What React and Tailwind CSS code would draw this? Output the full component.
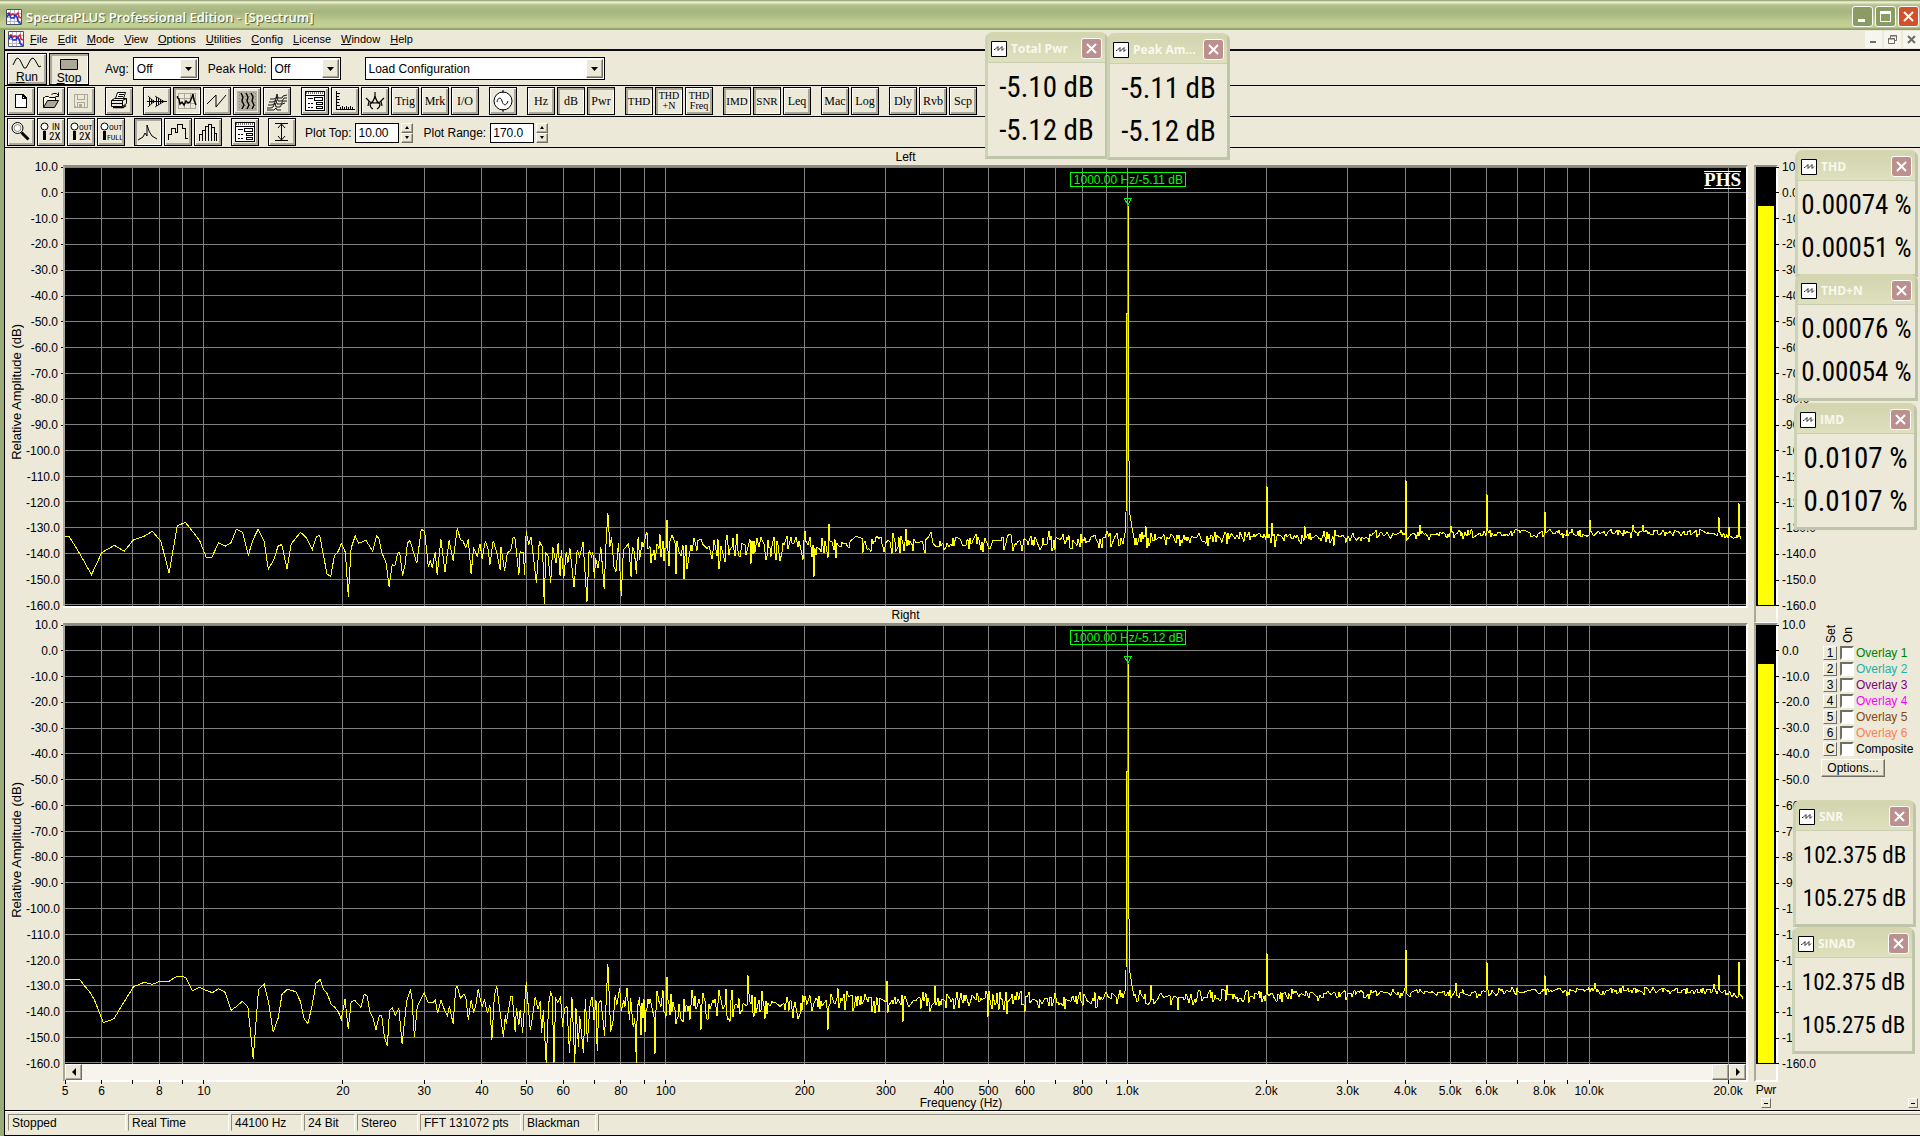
import React from "react";

// ---------- Dados ----------

const menuItems = ["File", "Edit", "Mode", "View", "Options", "Utilities", "Config", "License", "Window", "Help"];

const dbMarks = Array.from({ length: 18 }, (_, i) => 10 - i * 10);

const freqLines = [
  6, 7, 8, 9, 10, 20, 30, 40, 50, 60, 70, 80, 90, 100, 200, 300, 400, 500, 600, 700, 800, 900,
  1000, 2000, 3000, 4000, 5000, 6000, 7000, 8000, 9000, 10000, 20000
];

const freqLabels = {
  5: "5", 6: "6", 8: "8", 10: "10", 20: "20", 30: "30", 40: "40", 50: "50", 60: "60", 80: "80",
  100: "100", 200: "200", 300: "300", 400: "400", 500: "500", 600: "600", 800: "800",
  1000: "1.0k", 2000: "2.0k", 3000: "3.0k", 4000: "4.0k", 5000: "5.0k", 6000: "6.0k", 8000: "8.0k",
  10000: "10.0k", 20000: "20.0k"
};

const overlays = [
  { key: "1", label: "Overlay 1", color: "text-[#008000]" },
  { key: "2", label: "Overlay 2", color: "text-[#20b2aa]" },
  { key: "3", label: "Overlay 3", color: "text-[#800080]" },
  { key: "4", label: "Overlay 4", color: "text-[#ff00ff]" },
  { key: "5", label: "Overlay 5", color: "text-[#8b4513]" },
  { key: "6", label: "Overlay 6", color: "text-[#ff7f50]" },
  { key: "C", label: "Composite", color: "text-black" }
];

const statusCells = [
  { text: "Stopped", width: "w-[118px]" },
  { text: "Real Time", width: "w-[101px]" },
  { text: "44100 Hz", width: "w-[71px]" },
  { text: "24 Bit", width: "w-[51px]" },
  { text: "Stereo", width: "w-[61px]" },
  { text: "FFT 131072 pts", width: "w-[101px]" },
  { text: "Blackman", width: "w-[73px]" }
];

// Graves: amostras [x, y] em unidades finas, de 5 Hz até ~89 Hz
const leftLow = [
  160,109,170,109,198,165,225,224,250,158,281,136,305,154,328,119,352,110,374,94,395,124,415,220,435,78,455,67,
  475,98,490,122,506,172,520,172,536,128,553,138,567,128,580,88,595,97,609,165,621,118,633,88,648,125,658,208,
  671,180,682,139,691,133,704,206,714,132,737,97,750,111,766,149,776,110,784,106,802,222,811,230,820,167,830,153,
  837,130,847,157,854,290,861,145,871,108,879,130,897,121,914,154,923,108,929,114,936,157,947,190,954,260,962,193,
  968,198,975,160,980,157,987,227,993,195,999,130,1005,121,1022,190,1033,88,1041,94,1050,200,1055,182,1060,203,
  1067,155,1072,224,1081,118,1091,215,1101,121,1111,182,1121,85,1129,119,1135,123,1142,143,1148,118,1155,221,
  1161,145,1170,168,1177,131,1182,176,1190,122,1197,150,1201,194,1209,122,1218,158,1226,209,1228,140,1237,212,
  1244,158,1252,152,1258,112,1262,112,1272,224,1275,155,1283,158,1286,224,1290,94,1296,134,1302,110,1315,250,
  1322,124,1330,142,1334,311,1338,160,1343,166,1350,248,1355,140,1363,190,1368,130,1373,228,1376,150,1382,234,
  1388,155,1392,190,1397,145,1407,262,1415,150,1421,170,1429,127,1439,305,1444,150,1450,170,1453,155,1457,234,
  1460,175,1466,205,1473,142,1481,268,1486,120,1490,40,1495,140,1499,110,1505,200,1510,215,1516,128,1523,288,
  1528,150,1535,140,1541,130,1547,230,1550,140,1555,155,1560,222,1564,112,1568,180
];

const rightLow = [
  160,118,196,118,208,138,222,158,232,180,254,248,268,242,280,236,304,187,328,140,354,127,374,133,393,124,415,124,
  434,109,446,109,456,113,472,152,490,142,505,151,521,158,536,146,552,157,567,211,582,198,594,184,608,200,621,356,
  634,148,648,133,659,190,670,277,682,235,692,162,705,148,726,155,737,185,746,238,755,250,765,200,775,130,785,118,
  793,148,802,160,812,192,822,203,830,217,837,238,846,178,854,268,861,186,870,181,885,202,893,163,900,167,907,215,
  914,232,922,269,930,227,936,227,943,295,950,317,955,212,962,203,969,226,978,205,986,313,997,185,1006,151,
  1010,170,1016,292,1023,200,1040,159,1050,188,1062,188,1067,180,1073,220,1081,181,1090,210,1097,226,1102,199,
  1111,253,1117,147,1121,139,1129,175,1137,163,1142,170,1148,240,1155,181,1161,215,1166,200,1172,148,1182,200,
  1188,180,1195,220,1201,195,1206,301,1212,165,1218,139,1224,200,1234,290,1239,225,1241,253,1252,169,1256,170,
  1263,275,1266,205,1272,255,1275,210,1281,278,1290,127,1300,270,1305,235,1312,170,1319,208,1324,184,1328,278,
  1332,210,1339,370,1345,190,1350,157,1354,170,1358,370,1362,175,1367,187,1374,170,1379,260,1384,205,1390,200,
  1396,340,1402,170,1409,370,1412,205,1418,320,1421,228,1430,338,1435,178,1440,305,1447,185,1452,170,1456,240,
  1461,180,1464,334,1468,190,1473,180,1482,287,1490,72,1497,275,1503,240,1508,165,1512,195,1519,144,1523,213,
  1529,180,1532,200,1537,143,1543,240,1546,175,1552,262,1556,235,1560,370,1562,205,1568,170
];

// Picos e vales acima de ~89 Hz: [x, dB]
const leftPeaks = [
  [602, -127], [604, -145], [611, -148], [619, -150], [654, -146], [686, -144], [749, -149], [764, -128.5], [841, -130.5],
  [1081, -129.5], [1202, -114], [1207, -128], [1210, -137.5], [1240, -129.5], [1269, -137], [1341, -111.5], [1355, -129],
  [1386, -129.5], [1422, -117], [1480, -124], [1525, -127], [1568, -128.8], [1578, -129], [1654, -126], [1664, -129.6], [1674, -120.6]
];
const rightPeaks = [
  [580, -148], [590, -156.5], [602, -126.5], [612, -143], [636, -147], [642, -143], [665, -144], [683, -126], [763, -147],
  [773, -131], [822, -128], [838, -144], [870, -130], [923, -142], [942, -141], [1086, -129.6], [1113, -139.5], [1162, -129.6],
  [1202, -117.5], [1341, -116], [1391, -129], [1422, -121], [1480, -126], [1530, -129], [1558, -130], [1649, -129.5],
  [1654, -125.7], [1674, -120.8]
];

// Piso de ruído: [x, centro, amplitude]
const floor = [
  [575, -139, 9], [640, -137.5, 6], [760, -136.5, 5], [860, -135.5, 4], [1000, -135, 3.6], [1060, -134.5, 3],
  [1200, -133.6, 2.4], [1340, -132.8, 2], [1480, -131.9, 1.6], [1640, -132, 1.4], [1664, -133, 1.3], [1678, -134.5, 1]
];

// Tom principal em 1 kHz
const tone = [
  [1060, -132], [1061, -125], [1062, -47], [1063, -47], [1063, -5.1], [1063, -47], [1064, -104], [1065, -125],
  [1067, -130], [1069, -134]
];

const WIDTH = 1681;
const HEIGHT = 438;
const DECADE = 461.7;

const freqX = (f) => `${((Math.log10(f / 5) * DECADE) / WIDTH) * 100}%`;
const dbToY = (db) => ((10 - db) / 170) * HEIGHT;

function floorAt(x) {
  const i = Math.max(1, floor.findIndex((p) => p[0] >= x));
  const [x0, c0, a0] = floor[i - 1];
  const [x1, c1, a1] = floor[i];
  const t = (x - x0) / (x1 - x0);
  return [c0 + (c1 - c0) * t, a0 + (a1 - a0) * t];
}

function buildTrace(low, lowOffset, peaks, seed) {
  const points = [];
  for (let i = 0; i < low.length; i += 2) {
    points.push([(low[i] - 160) / 2.45, low[i + 1] / 3 + lowOffset]);
  }
  let s = seed;
  const random = () => {
    s = (s * 16807) % 2147483647;
    return s / 2147483647;
  };
  const byX = new Map(peaks);
  for (let x = 576; x <= 1678; x++) {
    if (x >= 1060 && x <= 1069) {
      if (x === 1060) tone.forEach(([px, db]) => points.push([px, dbToY(db)]));
      continue;
    }
    if (byX.has(x)) {
      points.push([x, dbToY(byX.get(x))]);
      continue;
    }
    const besidePeak = byX.has(x - 1) || byX.has(x + 1);
    if (!besidePeak && random() < 0.3) continue;
    const [center, amp] = floorAt(x);
    const n = random() + random() - 1;
    points.push([x, dbToY(center + n * amp * (n < 0 ? 1.4 : 1.1))]);
  }
  return points.map(([x, y]) => `${x.toFixed(1)},${Math.min(y, HEIGHT).toFixed(1)}`).join(" ");
}

const leftTrace = buildTrace(leftLow, 333, leftPeaks, 4711);
const rightTrace = buildTrace(rightLow, 315, rightPeaks, 90210);

// ---------- Ícones ----------

function Glyph({ children, size = 22, fill = "none" }) {
  return (
    <svg width={size} height={size} viewBox={`0 0 ${size} ${size}`} fill={fill} stroke="black" shapeRendering="crispEdges" className="shrink-0" aria-hidden="true">
      {children}
    </svg>
  );
}

const NewIcon = () => <Glyph><path d="M5.5 4.5h7l4 4v9h-11z" fill="white" strokeWidth="1.5" /><path d="M12.5 4.5v4h4" /></Glyph>;
const OpenIcon = () => (
  <Glyph>
    <path d="M3.500 17.500v-10h1l1-1h3l1 1h6v3" fill="#fffff0" shapeRendering="auto" />
    <path d="M3.500 17.500l4-7h11l-4 7z" fill="#aca899" shapeRendering="auto" />
    <path d="M11.500 4.500l2-1h3l2 2m0-3v4h-3" shapeRendering="auto" />
  </Glyph>
);
const SaveIcon = () => (
  <Glyph>
    <g stroke="#aca899">
      <path d="M4.500 4.500h13v13h-12l-1-1z" strokeWidth="1.500" />
      <path d="M7.500 4.500v5h7v-5M7.500 17.500v-5h7v5" />
      <path d="M9 14h2v3h-2z" fill="#aca899" />
    </g>
  </Glyph>
);
const PrintIcon = () => (
  <Glyph>
    <path d="M7.500 8.500l2-6h8l-2 6" fill="white" shapeRendering="auto" />
    <path d="M10.500 4.500h5M9.500 6.500h5" />
    <path d="M3.500 10.500l3-2h12v5l-4 3h-11z" fill="#ece9d8" shapeRendering="auto" />
    <path d="M3.500 10.500h11v6M14.500 10.500l4-2M3.500 13.500h11" shapeRendering="auto" />
    <path d="M5 17.500h10l3-2" strokeWidth="1.500" shapeRendering="auto" />
  </Glyph>
);
const BurstIcon = () => (
  <Glyph>
    <path d="M1 11.500h20M3.500 7v9M5.500 9v5M7.500 10v3M10.500 7v9M12.500 8v7M14.500 9v5M16.500 10v3" />
    <path d="M2 6l6 5.500L2 17M9 6l9 5.500L9 17" shapeRendering="auto" strokeWidth="0.800" />
  </Glyph>
);
const SpectrumIcon = () => (
  <Glyph>
    <path d="M2 3.500h18M2 8.500h18M2 13.500h18M2 18.500h18M2.500 3v16M8.500 3v16M14.500 3v16M19.500 3v16" stroke="#aca899" />
    <path d="M1.500 6v2l1.500 1 1 5 2-2 2 3 2-4 2 2 2-1 2-5 1-3 1 6 2 5" strokeWidth="1.400" shapeRendering="auto" />
  </Glyph>
);
const PhaseIcon = () => <Glyph><path d="M1 14L10 5V17L20 5" shapeRendering="auto" /></Glyph>;
const SpectrogramIcon = () => (
  <Glyph>
    <path d="M1 1h20v20H1z" fill="#b5b2a4" stroke="none" />
    <path d="M3 2v18M5 3v18M9 3v18M13 3v18M17 2v18M19 3v18" stroke="#8d8a7d" strokeDasharray="1 2" />
    <path d="M5 3l2 4-1 4 2 4-2 4M10 3l2 4-1 4 2 4-2 4M15 3l2 4-1 4 2 4-2 4" strokeWidth="1.400" shapeRendering="auto" />
  </Glyph>
);
const SurfaceIcon = () => (
  <Glyph>
    <path d="M4 9h4l2-1 1-4 1 4h4l1-2 4-1M3 12h4l2-1 2-4 1 4h4l2-3 3 0M2 15h4l2-1 2-4 1 4h4l2-3 4 0M1 18h4l2-1 2-4 1 4h4l2-3 3-1M1 20h7l2-2 1 2h4" strokeWidth="0.900" shapeRendering="auto" />
  </Glyph>
);
const PanelIcon = () => (
  <Glyph>
    <path d="M1.500 1.500h19v19h-19z" fill="white" />
    <path d="M2 3h18" strokeWidth="2" strokeDasharray="1 1" stroke="#777" />
    <path d="M1 5.500h20M4 8.500h5M10.500 7.500h8v3h-8zM12.500 12.500h6v2h-6zM12.500 16.500h6v2h-6z" />
    <path d="M4 13.500h5M4 17.500h5" strokeDasharray="2 1" />
  </Glyph>
);
const RulerIcon = () => (
  <Glyph>
    <path d="M2.500 1v18.500H21M3 3.500h3M3 6.500h2M3 9.500h3M3 12.500h2M3 15.500h3M6.500 19v-2M8.500 19v-3M10.500 19v-2M12.500 19v-3M14.500 19v-2M16.500 19v-3M18.500 19v-2" />
  </Glyph>
);
const CompassIcon = () => (
  <Glyph>
    <path d="M11 2v4M2 8l4 4 5 1 5-1 4-4M11 6c-1 4-3 7-5 8 0 3 1 4 3 5M11 6c1 4 3 7 5 8 0 3-1 4-3 5M5 11l-1 5M17 11l1 5" strokeWidth="1.200" shapeRendering="auto" />
  </Glyph>
);
const SineIcon = () => (
  <Glyph>
    <circle cx="11" cy="11" r="9" fill="white" shapeRendering="auto" />
    <path d="M11 0v3M11 19v3M5 12c1-5 4-5 5-1s4 6 6 0" shapeRendering="auto" />
  </Glyph>
);
const ZoomIcon = () => (
  <Glyph>
    <circle cx="7.500" cy="7" r="5.500" fill="white" shapeRendering="auto" />
    <circle cx="7.500" cy="7" r="3.500" stroke="#8a887c" shapeRendering="auto" />
    <path d="M11.500 11.500l7 7" strokeWidth="3" shapeRendering="auto" />
  </Glyph>
);

function ZoomTextIcon({ top, bottom }) {
  return (
    <Glyph>
      <circle cx="4.500" cy="5.500" r="3.500" fill="white" shapeRendering="auto" />
      <path d="M4.500 10v9" strokeWidth="3" />
      <g fill="black" stroke="none" fontFamily="Roboto Condensed">
        <text x={top === "IN" ? 12 : 9} y="9" fontSize={top === "IN" ? 9 : 8}>{top}</text>
        <text x={bottom === "2X" ? 9 : 7} y="19" fontSize={bottom === "2X" ? 11 : 8}>{bottom}</text>
      </g>
    </Glyph>
  );
}

const LinePlotIcon = () => <Glyph><path d="M1 19l5-3 2-4 2 3V4l2 6 3 5 5 3" shapeRendering="auto" /></Glyph>;
const OctaveIcon = () => <Glyph><path d="M1.500 19v-6h3v-6h4v4h2v-8h5v4h3v10h2" /></Glyph>;
const BarPlotIcon = () => <Glyph><path d="M2.500 20v-7h3v7v-11h3v11v-15h3v15v-17h3v17v-14h3v14v-8h2v8" /></Glyph>;
const RangeIcon = () => (
  <Glyph>
    <path d="M4 2.500h13M4 19.500h13M10.500 3v16" />
    <path d="M7 7l3.500-4L14 7M7 15l3.500 4 3.500-4" shapeRendering="auto" />
  </Glyph>
);

function AppIcon() {
  return (
    <svg width="16" height="16" viewBox="0 0 16 16" fill="none" aria-hidden="true">
      <path d="M0 0h16v16H0z" fill="white" />
      <path d="M4.500 0v16M8.500 0v16M12.500 0v16M0 4.500h16M0 8.500h16M0 12.500h16" stroke="#b4b6c2" />
      <path d="M.5.500h15v15H.5z" stroke="#4a4d5c" />
      <path d="M1 5l2-1 2 2 2-1 2 2 3-3 1 4 2 1" stroke="#e0203a" strokeWidth="1.500" />
      <path d="M1 8l2-3 2 4h3l1-3 2 2 1 4 3 3" stroke="#2030d0" strokeWidth="1.500" />
    </svg>
  );
}

function MeterIcon() {
  return (
    <svg width="16" height="16" viewBox="0 0 16 16" fill="none" stroke="black" className="shrink-0" aria-hidden="true">
      <path d="M.5.500h15v15H.5z" fill="white" />
      <path d="M3 8.500h1l3-3v4l4-4v4l2-2" strokeWidth=".8" />
    </svg>
  );
}

function CloseMark() {
  return (
    <svg width="13" height="13" viewBox="0 0 13 13" stroke="white" strokeWidth="2" aria-hidden="true">
      <path d="M2 2l9 9M11 2l-9 9" />
    </svg>
  );
}

// ---------- Barra de ferramentas ----------

const raised = "shadow-[inset_1px_1px_0_#ffffff,inset_-2px_-2px_0_#aca899]";
const sunken = "shadow-[inset_2px_2px_0_#aca899,inset_-1px_-1px_0_#ffffff]";

function ToolButton({ label, pressed, disabled, children }) {
  return (
    <button
      type="button"
      aria-label={label}
      aria-pressed={pressed}
      disabled={disabled}
      className={`flex h-7 w-7 shrink-0 items-center justify-center border border-black bg-[#ece9d8] font-['Liberation_Serif',serif] text-xs leading-none ${pressed ? sunken : raised}`}
    >
      {children}
    </button>
  );
}

function Stacked({ top, bottom }) {
  return (
    <span className="flex flex-col items-center text-[10px] leading-[10px]">
      <span>{top}</span>
      <span>{bottom}</span>
    </span>
  );
}

const Caps = ({ children }) => <span className="text-[11px]">{children}</span>;

const toolGroups = [
  [
    { label: "New", content: <NewIcon /> },
    { label: "Open", content: <OpenIcon /> },
    { label: "Save", content: <SaveIcon />, disabled: true }
  ],
  [{ label: "Print", content: <PrintIcon /> }],
  [
    { label: "Time series", content: <BurstIcon /> },
    { label: "Spectrum", content: <SpectrumIcon />, pressed: true },
    { label: "Phase", content: <PhaseIcon /> },
    { label: "Spectrogram", content: <SpectrogramIcon /> },
    { label: "3-D surface", content: <SurfaceIcon /> }
  ],
  [
    { label: "Settings", content: <PanelIcon /> },
    { label: "Scaling", content: <RulerIcon /> },
    { label: "Calibration", content: <CompassIcon /> },
    { label: "Trigger", content: "Trig" },
    { label: "Markers", content: "Mrk" },
    { label: "Input output", content: "I/O" }
  ],
  [{ label: "Signal generator", content: <SineIcon /> }],
  [
    { label: "Hertz", content: "Hz" },
    { label: "Decibel", content: "dB", pressed: true },
    { label: "Power", content: "Pwr", pressed: true }
  ],
  [
    { label: "THD", content: <Caps>THD</Caps>, pressed: true },
    { label: "THD+N", content: <Stacked top="THD" bottom="+N" />, pressed: true },
    { label: "THD Freq", content: <Stacked top="THD" bottom="Freq" /> }
  ],
  [
    { label: "IMD", content: <Caps>IMD</Caps>, pressed: true },
    { label: "SNR", content: <Caps>SNR</Caps>, pressed: true },
    { label: "Leq", content: "Leq" }
  ],
  [
    { label: "Macro", content: "Mac" },
    { label: "Log", content: "Log" }
  ],
  [
    { label: "Delay", content: "Dly" },
    { label: "Reverb", content: "Rvb" },
    { label: "Scope", content: "Scp" }
  ]
];

const plotGroups = [
  [
    { label: "Zoom", content: <ZoomIcon /> },
    { label: "Zoom in 2X", content: <ZoomTextIcon top="IN" bottom="2X" /> },
    { label: "Zoom out 2X", content: <ZoomTextIcon top="OUT" bottom="2X" /> },
    { label: "Zoom out full", content: <ZoomTextIcon top="OUT" bottom="FULL" /> }
  ],
  [
    { label: "Line plot", content: <LinePlotIcon />, pressed: true },
    { label: "Octave plot", content: <OctaveIcon /> },
    { label: "Bar plot", content: <BarPlotIcon /> }
  ],
  [{ label: "Plot options", content: <PanelIcon /> }],
  [{ label: "Auto range", content: <RangeIcon /> }]
];

function ToolGroups({ groups, gap }) {
  return (
    <div className={`flex ${gap}`}>
      {groups.map((group) => (
        <div key={group[0].label} className="flex gap-0.5">
          {group.map(({ content, ...tool }) => (
            <ToolButton key={tool.label} {...tool}>{content}</ToolButton>
          ))}
        </div>
      ))}
    </div>
  );
}

function DropDown({ id, value, width }) {
  return (
    <div className={`relative h-[23px] ${width}`}>
      <select id={id} aria-label={value} className="h-full w-full appearance-none border border-black bg-white pl-[3px] text-xs text-black">
        <option>{value}</option>
      </select>
      <span className="pointer-events-none absolute top-0.5 right-0.5 flex h-[19px] w-[17px] items-center justify-center border border-t-white border-r-[#716f64] border-b-[#716f64] border-l-white bg-[#ece9d8] shadow-[inset_-1px_-1px_0_#aca899]">
        <svg width="7" height="4" viewBox="0 0 7 4" aria-hidden="true"><path d="M0 0h7L3.500 4z" /></svg>
      </span>
    </div>
  );
}

function NumberBox({ id, label, value }) {
  return (
    <div className="flex items-center">
      <label htmlFor={id} className="mr-1">{label}</label>
      <input id={id} defaultValue={value} className="h-5 w-11 border border-black bg-white pl-0.5 text-xs" />
      <div className="ml-0.5 flex flex-col">
        {["M0 3h4L2 0z", "M0 0h4L2 3z"].map((d, i) => (
          <button key={d} type="button" aria-label={i ? `Decrease ${label}` : `Increase ${label}`} className="flex h-2.5 w-3 items-center justify-center border border-t-white border-r-[#716f64] border-b-[#716f64] border-l-white shadow-[inset_-1px_-1px_0_#aca899]">
            <svg width="4" height="3" viewBox="0 0 4 3" aria-hidden="true"><path d={d} /></svg>
          </button>
        ))}
      </div>
    </div>
  );
}

// ---------- Gráficos ----------

function Plot({ trace, marker, logo }) {
  return (
    <div className="relative min-h-0 border-t-2 border-r-2 border-l-2 border-t-[#8f8c80] border-r-white border-l-[#aca899] bg-black">
      <svg width="100%" height="100%" className="absolute inset-0 block overflow-hidden" shapeRendering="crispEdges">
        <g stroke="#808080">
          {freqLines.map((f) => <line key={f} x1={freqX(f)} x2={freqX(f)} y1="0" y2="100%" />)}
          {dbMarks.map((db) => <line key={db} x1="0" x2="100%" y1={`${((10 - db) / 170.4) * 100}%`} y2={`${((10 - db) / 170.4) * 100}%`} />)}
        </g>
        <svg width="100%" height="100%" viewBox={`0 0 ${WIDTH} ${HEIGHT + 1}`} preserveAspectRatio="none">
          <polyline points={trace} fill="none" stroke="#ffff00" vectorEffect="non-scaling-stroke" />
        </svg>
        <svg x={freqX(1000)} y="0" className="overflow-visible" stroke="#00ff00" fill="none">
          <rect x="-56.500" y="5.500" width="115" height="14" />
          <path d="M.5 1v36M-3 31.500h7L.5 38z" />
          <text x="1" y="17" textAnchor="middle" fontSize="12" fill="#00ff00" stroke="none">{marker}</text>
        </svg>
      </svg>
      {logo && (
        <span className="absolute top-1 right-[5px] border-y border-white font-['Liberation_Serif',serif] text-[19px] leading-4 font-bold text-white">PHS</span>
      )}
    </div>
  );
}

function AmplitudeTitle() {
  return (
    <div className="flex items-center justify-center pt-3">
      <span className="rotate-180 text-[13px] leading-none whitespace-nowrap [writing-mode:vertical-rl]">Relative Amplitude (dB)</span>
    </div>
  );
}

function DbScale() {
  return (
    <div className="-mt-1 -mb-1.5 flex flex-col justify-between text-right">
      {dbMarks.map((db) => (
        <div key={db} className="flex h-3 items-center justify-end gap-[3px]">
          <span className="leading-3">{db.toFixed(1)}</span>
          <span className="h-px w-0.5 bg-black" />
        </div>
      ))}
    </div>
  );
}

function MeterScale() {
  return (
    <div className="-mt-1 -mb-1.5 -ml-0.5 flex flex-col justify-between">
      {dbMarks.map((db) => (
        <div key={db} className="flex h-3 items-center gap-[3px]">
          <span className="h-px w-[3px] bg-black" />
          <span className="leading-3">{db.toFixed(1)}</span>
        </div>
      ))}
    </div>
  );
}

function PowerMeter({ level }) {
  return (
    <div className="flex flex-col border-t-2 border-r-2 border-l-2 border-t-[#8f8c80] border-r-white border-l-[#aca899] bg-black px-0.5 pb-px">
      <div className="mt-auto bg-[#ffff00]" style={{ height: `${((level + 160) / 170) * 100}%` }} />
    </div>
  );
}

function PlotScrollBar() {
  const button = "flex h-4 w-[17px] items-center justify-center border border-t-white border-r-[#716f64] border-b-[#716f64] border-l-white bg-[#ece9d8] shadow-[inset_-1px_-1px_0_#aca899]";
  return (
    <div className="flex border-r-2 border-b-2 border-l-2 border-r-white border-b-white border-l-[#aca899] bg-[#f6f4ec]">
      <button type="button" aria-label="Scroll left" className={button}>
        <svg width="4" height="8" viewBox="0 0 4 8" aria-hidden="true"><path d="M4 0v8L0 4z" /></svg>
      </button>
      <span className={`${button} ml-auto`} />
      <button type="button" aria-label="Scroll right" className={button}>
        <svg width="4" height="8" viewBox="0 0 4 8" aria-hidden="true"><path d="M0 0v8l4-4z" /></svg>
      </button>
    </div>
  );
}

function FrequencyAxis() {
  return (
    <div className="px-0.5">
      <svg width="100%" height="28" className="block overflow-visible" fontSize="12">
        {[5, ...freqLines].map((f) => (
          <line key={f} x1={freqX(f)} x2={freqX(f)} y1="-2" y2="2" stroke="black" shapeRendering="crispEdges" />
        ))}
        {Object.entries(freqLabels).map(([f, text]) => (
          <text key={f} x={freqX(Number(f))} y="13" textAnchor="middle">{text}</text>
        ))}
        <text x="53.3%" y="25" textAnchor="middle">Frequency (Hz)</text>
      </svg>
    </div>
  );
}

function MinusButton({ label }) {
  return (
    <button type="button" aria-label={label} className="flex h-2.5 w-2.5 items-center justify-center border border-t-white border-r-[#716f64] border-b-[#716f64] border-l-white">
      <span className="h-px w-1 bg-black" />
    </button>
  );
}

function OverlayPanel() {
  return (
    <div className="flex flex-col items-start">
      <div className="flex h-[22px] items-end pb-0.5 pl-0.5">
        <span className="w-[17px] rotate-180 leading-[17px] [writing-mode:vertical-rl]">Set</span>
        <span className="w-[17px] rotate-180 leading-[17px] [writing-mode:vertical-rl]">On</span>
      </div>
      {overlays.map((item) => (
        <div key={item.key} className="flex h-4 items-center pl-0.5">
          <button type="button" aria-label={`Set ${item.label}`} className="h-3.5 w-3.5 border border-t-white border-r-[#716f64] border-b-[#716f64] border-l-white leading-3">{item.key}</button>
          <input id={`overlay-${item.key}`} type="checkbox" className="ml-[3px] h-3.5 w-3.5 appearance-none border-2 border-t-[#716f64] border-r-white border-b-white border-l-[#716f64] bg-white" />
          <label htmlFor={`overlay-${item.key}`} className={`ml-0.5 leading-4 ${item.color}`}>{item.label}</label>
        </div>
      ))}
      <button type="button" className="mt-0.5 h-[18px] w-16 border border-t-white border-r-[#716f64] border-b-[#716f64] border-l-white leading-4 shadow-[inset_-1px_-1px_0_#aca899]">Options...</button>
    </div>
  );
}

// ---------- Janelas flutuantes ----------

function ReadoutWindow({ title, values, position, size }) {
  return (
    <section className={`absolute flex h-[127px] w-[123px] flex-col rounded-t-lg border-[3px] border-t-[#d3d6ae] border-r-[#bfc5a8] border-b-[#bfc5a8] border-l-[#ccd3b4] bg-[#ece9d8] ${position}`}>
      <header className="flex h-[27px] shrink-0 items-center gap-1 bg-linear-to-b from-[#d2d5b0] to-[#dfe0bd] pr-[3px] pl-[3px]">
        <MeterIcon />
        <h2 className="min-w-0 flex-1 truncate font-['Open_Sans',sans-serif] text-xs leading-5 font-bold text-[#f8f8ee]">{title}</h2>
        <button type="button" aria-label={`Close ${title}`} className="flex h-[21px] w-[21px] shrink-0 items-center justify-center rounded-[3px] border border-white bg-[#bd9090]">
          <CloseMark />
        </button>
      </header>
      <div className={`flex flex-1 flex-col items-center justify-center border-t border-[#c9ceb0] pb-0.5 font-['Roboto_Condensed','Liberation_Sans',sans-serif] leading-[43px] whitespace-nowrap ${size}`}>
        <span>{values[0]}</span>
        <span>{values[1]}</span>
      </div>
    </section>
  );
}

function TitleBar() {
  const box = "flex h-[21px] w-[21px] items-center justify-center rounded-[3px] border border-white";
  return (
    <header className="flex h-[30px] shrink-0 items-center bg-[linear-gradient(to_bottom,#7f9160_0px,#f4f6d8_2px,#b3c08c_5px,#a6b57f_12px,#bfcd92_22px,#c3d196_27px,#8d9f68_29px)] pt-[3px] pr-px pl-1.5">
      <AppIcon />
      <h1 className="ml-1 flex-1 font-['Open_Sans',sans-serif] text-[13px] leading-5 font-semibold text-white [text-shadow:1px_1px_0_#5b6a3c]">SpectraPLUS Professional Edition - [Spectrum]</h1>
      <div className="flex gap-0.5">
        <button type="button" aria-label="Minimize" className={`${box} bg-[#8a9c63]`}>
          <svg width="13" height="13" viewBox="0 0 13 13" aria-hidden="true"><path d="M2 9h7v3H2z" fill="white" /></svg>
        </button>
        <button type="button" aria-label="Maximize" className={`${box} bg-[#8a9c63]`}>
          <svg width="13" height="13" viewBox="0 0 13 13" aria-hidden="true"><path d="M1 1h11v11H1zM2 4v7h9V4z" fill="white" fillRule="evenodd" /></svg>
        </button>
        <button type="button" aria-label="Close" className={`${box} bg-[#d2512b]`}><CloseMark /></button>
      </div>
    </header>
  );
}

function MenuBar() {
  const box = "flex h-[17px] w-[17px] items-center justify-center bg-[#f6f5ee]";
  return (
    <nav className="flex h-[21px] shrink-0 items-center border-b-2 border-[#0c0c18] pb-px pl-[3px] text-[11px]">
      <AppIcon />
      <div className="ml-1.5 flex flex-1 gap-2.5">
        {menuItems.map((item) => (
          <a key={item} href="#" className="leading-4"><span className="underline">{item[0]}</span>{item.slice(1)}</a>
        ))}
      </div>
      <div className="flex gap-0.5">
        <button type="button" aria-label="Minimize document" className={box}>
          <svg width="9" height="9" viewBox="0 0 9 9" aria-hidden="true"><path d="M1 6h6v2H1z" fill="#716f64" /></svg>
        </button>
        <button type="button" aria-label="Restore document" className={box}>
          <svg width="9" height="9" viewBox="0 0 9 9" fill="none" stroke="#716f64" aria-hidden="true"><path d="M2.500 3V.5h6v5H7M2 1h7M.5 3.500h6v5h-6zM0 4h7" /></svg>
        </button>
        <button type="button" aria-label="Close document" className={box}>
          <svg width="9" height="9" viewBox="0 0 9 9" stroke="#716f64" strokeWidth="2" aria-hidden="true"><path d="M1 1l7 7M8 1L1 8" /></svg>
        </button>
      </div>
    </nav>
  );
}

export default function App() {
  return (
    <div className="relative flex h-screen min-h-[700px] w-full flex-col overflow-hidden bg-[#ece9d8] font-['Liberation_Sans',Arial,sans-serif] text-xs text-black">
      <TitleBar />
      <div className="flex min-h-0 flex-1 flex-col border-l-4 border-[#9aab76]">
        <div className="flex min-h-0 flex-1 flex-col border-b border-l border-black">
          <MenuBar />

          <div className="flex h-[35px] shrink-0 items-center border-b border-black pt-px pl-0.5">
            <div className="flex gap-0.5">
              <button type="button" className={`flex h-8 w-10 flex-col items-center border border-black text-xs leading-3 ${raised}`}>
                <svg width="30" height="17" viewBox="0 0 30 17" fill="none" stroke="black" aria-hidden="true"><path d="M1 11l3-6 2-1 2 2 4 8 2 0 5-9 2-1 2 2 4 7 2-1" /></svg>
                <span><u>R</u>un</span>
              </button>
              <button type="button" aria-pressed="true" className={`flex h-8 w-10 flex-col items-center border border-black text-xs leading-3 ${sunken}`}>
                <svg width="18" height="18" viewBox="0 0 18 18" aria-hidden="true"><path d="M.5 5.500h17v10H.5z" fill="#aca899" stroke="black" /></svg>
                <span><u>S</u>top</span>
              </button>
            </div>
            <label htmlFor="avg" className="mr-1 ml-4">Avg:</label>
            <DropDown id="avg" value="Off" width="w-[66px]" />
            <label htmlFor="peak-hold" className="mr-1 ml-[9px]">Peak Hold:</label>
            <DropDown id="peak-hold" value="Off" width="w-[70px]" />
            <div className="ml-6">
              <DropDown id="configuration" value="Load Configuration" width="w-[240px]" />
            </div>
          </div>

          <div className="flex h-[31px] shrink-0 items-center border-b border-black pl-0.5">
            <ToolGroups groups={toolGroups} gap="gap-2.5" />
          </div>

          <div className="flex h-[31px] shrink-0 items-center border-b border-black pl-0.5">
            <ToolGroups groups={plotGroups} gap="gap-[9px]" />
            <div className="ml-[9px] flex gap-2.5 pt-px">
              <NumberBox id="plot-top" label="Plot Top:" value="10.00" />
              <NumberBox id="plot-range" label="Plot Range:" value="170.0" />
            </div>
          </div>

          <main className="grid min-h-0 flex-1 grid-cols-[22px_36px_1fr_6px_24px_142px] grid-rows-[17px_minmax(0,1fr)_17px_minmax(0,1fr)_18px_28px]">
            <div className="col-start-3 text-center leading-[18px]">Left</div>
            <div className="col-span-3" />

            <AmplitudeTitle />
            <DbScale />
            <Plot trace={leftTrace} marker="1000.00 Hz/-5.11 dB" logo />
            <div />
            <PowerMeter level={-5.1} />
            <MeterScale />

            <div className="col-start-3 border-t-2 border-white text-center leading-[14px]">Right</div>
            <div />
            <div className="border-r-2 border-b border-l-2 border-r-white border-b-white border-l-[#aca899]" />
            <div />

            <AmplitudeTitle />
            <DbScale />
            <Plot trace={rightTrace} marker="1000.00 Hz/-5.12 dB" />
            <div />
            <PowerMeter level={-5.12} />
            <div className="flex">
              <div className="flex w-[43px] shrink-0"><MeterScale /></div>
              <OverlayPanel />
            </div>

            <div className="col-start-3 grid"><PlotScrollBar /></div>
            <div />
            <div className="border-r-2 border-b-2 border-l-2 border-r-white border-b-white border-l-[#aca899]" />
            <div />

            <div className="col-start-3"><FrequencyAxis /></div>
            <div />
            <div className="flex flex-col items-center leading-4">
              <span>Pwr</span>
              <MinusButton label="Collapse power meter" />
            </div>
            <div className="flex items-end justify-end pr-0.5 pb-0.5"><MinusButton label="Collapse overlays" /></div>
          </main>

          <footer className="flex h-[25px] shrink-0 gap-0.5 border-t border-black pt-[3px] pb-1 pl-[3px] shadow-[inset_0_1px_0_#ffffff]">
            {statusCells.map((cell) => (
              <div key={cell.text} className={`border border-t-[#8f8c80] border-r-white border-b-[#ece9d8] border-l-[#8f8c80] pl-[3px] leading-4 whitespace-nowrap ${cell.width}`}>{cell.text}</div>
            ))}
            <div className="flex-1 border-t border-l border-[#8f8c80]" />
          </footer>
        </div>
      </div>

      <ReadoutWindow title="Total Pwr" values={["-5.10 dB", "-5.12 dB"]} position="top-8 left-[985px]" size="text-[29px]" />
      <ReadoutWindow title="Peak Amplitude" values={["-5.11 dB", "-5.12 dB"]} position="top-[33px] left-[1107px]" size="text-[29px]" />
      <ReadoutWindow title="THD" values={["0.00074 %", "0.00051 %"]} position="top-[150px] right-0.5" size="text-[27px]" />
      <ReadoutWindow title="THD+N" values={["0.00076 %", "0.00054 %"]} position="top-[274px] right-0.5" size="text-[27px]" />
      <ReadoutWindow title="IMD" values={["0.0107 %", "0.0107 %"]} position="top-[403px] right-[3px]" size="text-[29px]" />
      <ReadoutWindow title="SNR" values={["102.375 dB", "105.275 dB"]} position="top-[800px] right-1" size="text-[23px]" />
      <ReadoutWindow title="SINAD" values={["102.375 dB", "105.275 dB"]} position="top-[927px] right-[5px]" size="text-[23px]" />
    </div>
  );
}
